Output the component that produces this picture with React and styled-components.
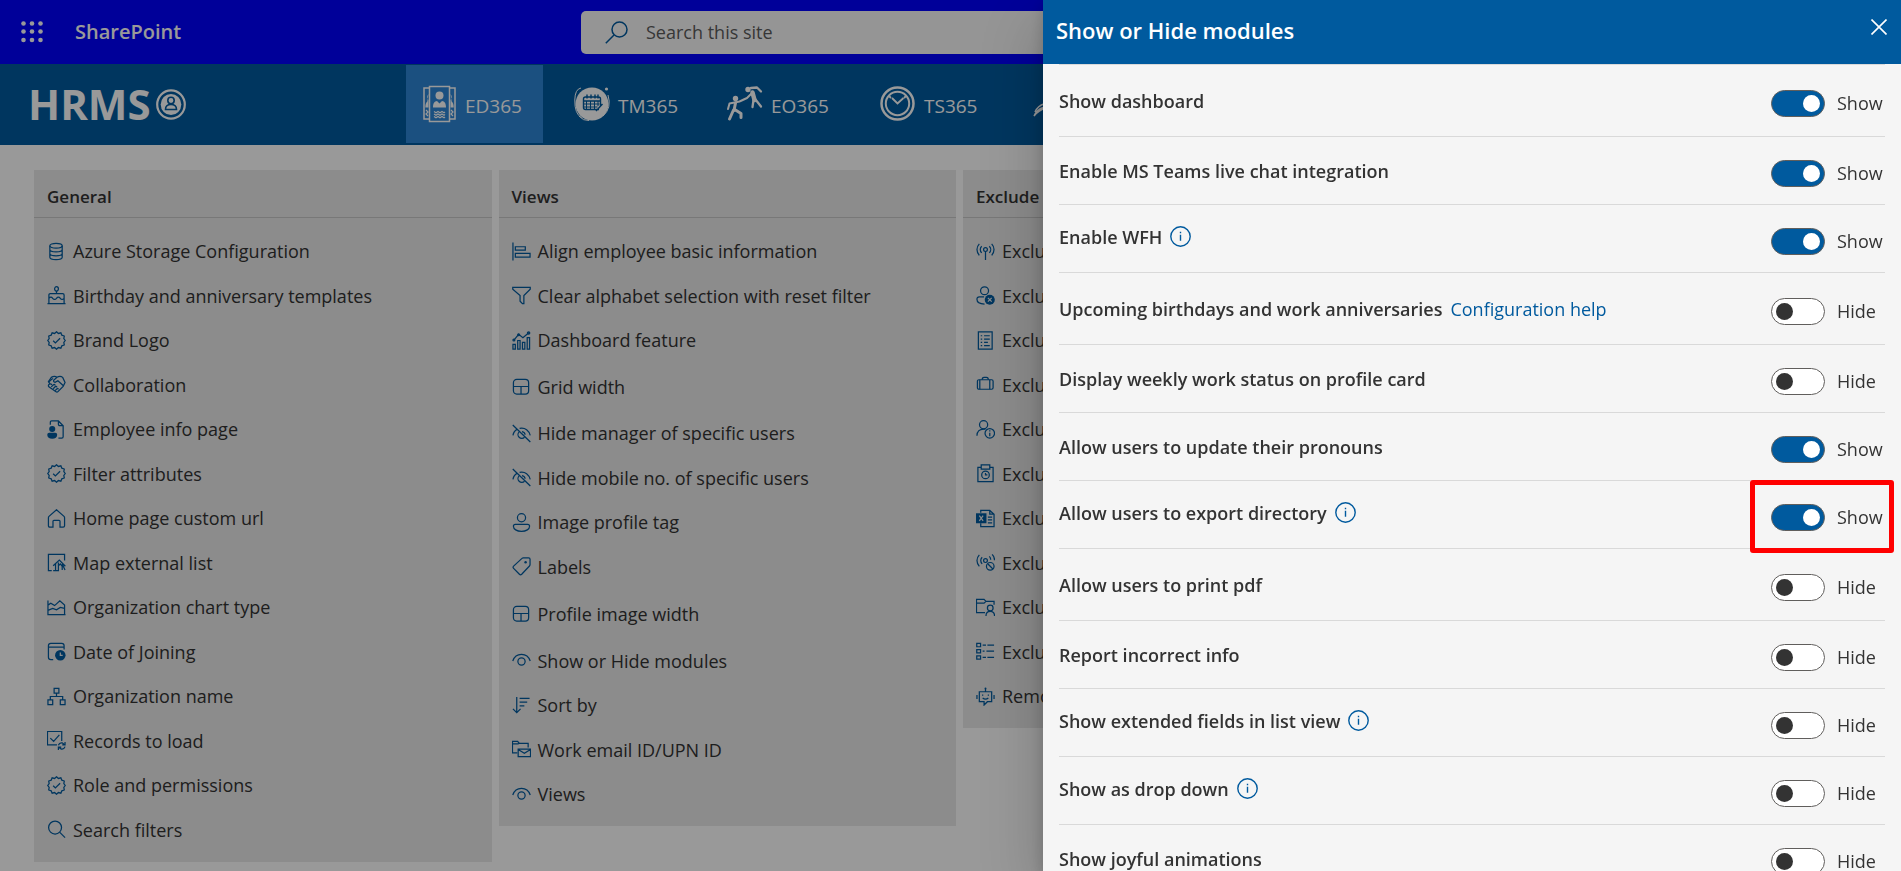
import React, { useState } from "react";
import styled, { createGlobalStyle, css } from "styled-components";

const blue = "#005a9e";
const ink = "#333333";

const GlobalStyle = createGlobalStyle`
  *, *::before, *::after { box-sizing: border-box; }
  body {
    margin: 0;
    background: #ffffff;
    color: ${ink};
    font-family: "Segoe UI", "Open Sans", "Noto Sans", sans-serif;
    font-size: 18px;
    line-height: 24px;
  }
  button, input { font: inherit; color: inherit; }
`;

/* ---------- Suite bar ---------- */

const SuiteBar = styled.header`
  display: grid;
  grid-template-columns: 1fr minmax(0, 739px) 1fr;
  align-items: center;
  height: 64px;
  background: #0000ff;
`;

const Brand = styled.div`
  display: flex;
  align-items: center;
  gap: 22px;
  padding: 0 11px;
`;

const Waffle = styled.button`
  display: flex;
  padding: 10px;
  border: 0;
  background: none;
  color: #ffffff;
`;

const BrandLink = styled.a`
  color: #ffffff;
  font-size: 20px;
  font-weight: 600;
  text-decoration: none;
`;

const SearchBox = styled.label`
  display: flex;
  align-items: center;
  gap: 18px;
  height: 43px;
  padding: 0 24px;
  border-radius: 5px;
  background: #f9f9f9;
  color: ${blue};
`;

const SearchInput = styled.input`
  flex: 1;
  min-width: 0;
  padding: 0;
  border: 0;
  outline: 0;
  background: none;
  &::placeholder { color: #5c5c5c; opacity: 1; }
`;

/* ---------- Product navigation ---------- */

const NavBar = styled.div`
  display: flex;
  align-items: flex-start;
  height: 81px;
  padding: 1px 0 0 28px;
  background: ${blue};
  color: #ffffff;
  overflow: hidden;
`;

const Logo = styled.a`
  display: flex;
  align-items: center;
  gap: 5px;
  flex: 0 0 378px;
  height: 78px;
  color: inherit;
  font-family: "Open Sans", "Noto Sans", sans-serif;
  font-size: 42px;
  font-weight: 700;
  line-height: 48px;
  text-decoration: none;
`;

const Tabs = styled.nav`
  display: flex;
  gap: 16px;
`;

const Tab = styled.a`
  display: flex;
  flex: none;
  align-items: center;
  gap: 8px;
  width: 137px;
  height: 78px;
  padding-left: 15px;
  color: inherit;
  font-size: 19px;
  text-decoration: none;
  ${(p) =>
    p.$active &&
    css`
      background: #2d86d6;
    `}
`;

const TabText = styled.span`
  padding-top: 4px;
`;

/* ---------- Settings cards ---------- */

const Cards = styled.main`
  display: grid;
  grid-template-columns: repeat(4, minmax(0, 1fr));
  align-items: start;
  gap: 7px;
  padding: 25px 16px 10px 34px;
`;

const Card = styled.section`
  background: #e9e9e9;
`;

const CardTitle = styled.h2`
  height: 48px;
  margin: 0;
  padding: 15px 13px 0;
  border-bottom: 1px solid #c8c8c8;
  font-size: 17px;
  font-weight: 600;
`;

const CardList = styled.ul`
  margin: 0;
  padding: 11px 13px 10px;
  list-style: none;
`;

const CardItem = styled.li`
  height: 44px;
  &:nth-child(even) { height: 45px; }
  ${(p) =>
    p.$tall &&
    css`
      &&& { height: 49px; }
    `}
`;

const CardLink = styled.a`
  display: flex;
  align-items: center;
  gap: 7px;
  height: 100%;
  color: inherit;
  text-decoration: none;
  white-space: nowrap;
  svg { color: ${blue}; }
`;

/* ---------- Overlay and side panel ---------- */

const Overlay = styled.div`
  position: fixed;
  inset: 0;
  background: rgba(0, 0, 0, 0.4);
`;

const Panel = styled.aside`
  position: fixed;
  top: 0;
  right: 0;
  bottom: 0;
  display: flex;
  flex-direction: column;
  width: 858px;
  max-width: 100%;
  background: #f5f5f5;
  box-shadow: 0 26px 58px rgba(0, 0, 0, 0.22), 0 5px 14px rgba(0, 0, 0, 0.18);
`;

const PanelHeader = styled.header`
  display: flex;
  flex: none;
  align-items: flex-start;
  justify-content: space-between;
  height: 64px;
  padding: 14px 9px 0 13px;
  background: ${blue};
  color: #ffffff;
`;

const PanelTitle = styled.h1`
  margin: 0;
  font-size: 22px;
  font-weight: 600;
  line-height: 32px;
`;

const CloseButton = styled.button`
  display: flex;
  padding: 5px;
  border: 0;
  background: none;
`;

const PanelBody = styled.div`
  flex: 1;
  min-height: 0;
  padding: 0 16px;
  overflow: auto;
  scrollbar-width: none;
`;

const Settings = styled.ul`
  margin: 0;
  padding: 0;
  border-top: 1px solid #d9d9d9;
  list-style: none;
`;

const Setting = styled.li`
  position: relative;
  display: flex;
  align-items: center;
  justify-content: space-between;
  height: ${(p) => (p.$tall ? "72px" : "68px")};
  border-bottom: 1px solid #d9d9d9;
`;

const SettingName = styled.div`
  display: flex;
  align-items: center;
  gap: 8px;
  padding-bottom: ${(p) => (p.$info ? "4px" : "0")};
  font-weight: 600;
`;

const HelpLink = styled.a`
  color: ${blue};
  font-weight: 400;
  text-decoration: none;
`;

const InfoButton = styled.button`
  display: flex;
  padding: 0;
  border: 0;
  background: none;
  color: ${blue};
`;

const ToggleGroup = styled.label`
  display: flex;
  align-items: center;
  gap: 12px;
  width: 114px;
  padding-top: 6px;
`;

const ToggleText = styled.span`
  padding-bottom: 2px;
`;

const Toggle = styled.input`
  display: flex;
  flex: none;
  align-items: center;
  width: 54px;
  height: 27px;
  margin: 0;
  padding: 0 4px;
  appearance: none;
  border: 1px solid #605e5c;
  border-radius: 14px;
  background: #ffffff;
  &::before {
    content: "";
    width: 17px;
    height: 17px;
    border-radius: 50%;
    background: ${ink};
  }
  &:checked {
    justify-content: flex-end;
    background: ${blue};
  }
  &:checked::before { background: #ffffff; }
`;

const Highlight = styled.span`
  position: absolute;
  top: -1px;
  right: -9px;
  width: 144px;
  height: 73px;
  border: 5px solid #ff0000;
  border-radius: 3px;
  pointer-events: none;
`;

/* ---------- Icons ---------- */

const IconSvg = styled.svg`
  flex: none;
  fill: none;
  stroke: currentColor;
`;

const solid = { fill: "currentColor", stroke: "none" };

const shapes = {
  database: (
    <>
      <ellipse cx="9.5" cy="4" rx="6.5" ry="2.5" />
      <path d="M3 4v12c0 1.400 2.900 2.500 6.500 2.500s6.500-1.100 6.500-2.500V4M3 8c0 1.400 2.900 2.500 6.500 2.500S16 9.400 16 8M3 12c0 1.400 2.900 2.500 6.500 2.500s6.500-1.100 6.500-2.500" />
    </>
  ),
  cake: (
    <>
      <ellipse cx="10" cy="3" rx="2" ry="2.300" />
      <path d="M10 5.300v2.700M.5 18.500h19M2 18.500V9.500Q2 8 3.500 8h13Q18 8 18 9.500v9M2 13c1.500-1.600 2.800-1.600 4 0s2.800 1.600 4 0 2.800-1.600 4 0 2.500 1.600 4 0" />
    </>
  ),
  badge: (
    <>
      <path d="M10 .8l2 1.800 2.600-.7 1 2.500 2.600.9-.5 2.700L19.200 10l-1.500 2 .5 2.700-2.600.9-1 2.500-2.600-.7-2 1.800-2-1.800-2.600.7-1-2.500-2.600-.9.5-2.700L.8 10l1.500-2-.5-2.700 2.600-.9 1-2.500 2.600.7z" />
      <path d="M6.500 10.300l2.300 2.300 5-5" />
    </>
  ),
  handshake: (
    <>
      <path d="M3.500 9.500L1.500 7l3-4.500C7 1 8.500 1 10.500 2.300 13 1 15 1.200 16.500 2.500L19 8l-2 4-5.500 5.500q-1 1-2 0L2 12.500q-1.200-1.500.3-2.700t3 .5" />
      <path d="M4.500 12.500l2.300-2.300q1.500-.8 1.800 1M6.500 14.500l2.300-2.300q1.500-.8 1.600 1M8.500 16.500l2-2q1.200-.6 1.500.7M10.500 2.300L7 5.500q-.5 2 1.500 2.200L11.500 6l5.500 5M1.500 7C4 6 4.500 4 6.500 3.800" />
    </>
  ),
  personFile: (
    <>
      <path d="M3.500 5V2.500q0-1.500 1.500-1.500h7l5 5v11.500q0 1.500-1.500 1.500H12M12 1v3.500Q12 6 13.500 6H17" />
      <circle cx="5.500" cy="9.500" r="3.200" {...solid} />
      <path d="M.3 15.500q0-2 2-2h6.400q2 0 2 2c0 2.500-2 4.300-5.200 4.300S.3 18 .3 15.500z" {...solid} />
    </>
  ),
  home: <path d="M1.500 9.300q0-.9.600-1.500L10 .8l7.900 7q.6.600.6 1.500v8.200q0 1.500-1.500 1.500h-3.300v-6q0-1-1-1H7.300q-1 0-1 1v6H3q-1.500 0-1.500-1.500z" />,
  mapHome: (
    <path d="M5 18.500H1.500v-17h17V8M6.500 13.500L13 7.500l6.300 6.500M9 18.500V11M6.500 18.500h5.500v-5l2-2 2 2.500v4M12 10v8.500M16 11.500l3 6.500" />
  ),
  areaChart: (
    <path d="M1 2.500v15h18.500M1 7.500l3-2 4 2.500L13.500 3l5 4.500v10M1 13l5-2 4 1.500 4-2.500 4.500 1" />
  ),
  dateClock: (
    <>
      <path d="M6.500 18.500H4q-2.500 0-2.500-2.500V4q0-2.500 2.500-2.500h11.500Q18 1.500 18 4v4M1.500 5.500H18" />
      <circle cx="14" cy="14" r="5.500" {...solid} />
      <path d="M14 11v3h2.500" stroke="#e9e9e9" />
    </>
  ),
  orgChart: (
    <path d="M7.500 1.500h5v5h-5zM1 13.500h5v5H1zM14 13.500h5v5h-5zM10 6.500V10M3.500 13.500V10h13v3.500" />
  ),
  records: (
    <path d="M10.500 14.500h-10v-14h15v10M3.500 7.500l3.500 3.500 6-7M12 15q1-3 4-2.500l2.500 2M19 11.500v3h-3M19 16.500q-1 3-4 2.500l-2.500-2M12 20v-3h3" />
  ),
  search: (
    <>
      <circle cx="8.500" cy="8" r="6.800" />
      <path d="M13.500 13l5.500 5.500" />
    </>
  ),
  align: <path d="M1 .5v19M3.500 5h10.500v3.500H3.500zM3.500 12H19v4H3.500z" />,
  funnel: <path d="M.8 1.500h18.400v1.800L12.500 10v8.500H11L8.500 16v-6L.8 3.300z" />,
  barTrend: (
    <>
      <path d="M1 14h2.500v5H1zM6 10h2.500v9H6zM11 12h2.500v7H11zM16 7h2.500v12H16zM2 9.500l5-6 4.500 3.500L18 1.500" />
      <circle cx="2" cy="9.500" r="1" />
      <circle cx="7" cy="4" r="1" />
      <circle cx="17.500" cy="2" r="1.200" />
    </>
  ),
  layout: (
    <>
      <rect x="1.500" y="2.500" width="16" height="15.500" rx="3.500" />
      <path d="M1.500 10h16M9.500 10v8" />
    </>
  ),
  eyeOff: (
    <>
      <path d="M.8 1l18.500 18M1 12c.5-3 2.200-5.300 4.700-6.600M8 4.500c6-1.200 10 2.500 11.200 7.500" />
      <path d="M7.500 8.300a4 4 0 1 0 5.700 5.700M10.500 8q3 .5 3.300 3.300" />
    </>
  ),
  contact: (
    <>
      <circle cx="10" cy="5" r="4.300" />
      <path d="M1.500 14q0-2 2-2h13q2 0 2 2c0 3-3.500 5.300-8.500 5.300S1.500 17 1.500 14z" />
    </>
  ),
  tag: (
    <>
      <path d="M10.500 1.500q.6-.6 1.500-.6h5.500q1.500 0 1.500 1.500V8q0 .9-.6 1.500l-8.200 8.700q-1.200 1.200-2.400 0L1.700 12q-1.200-1.200 0-2.400z" />
      <circle cx="14.300" cy="5.500" r="1.300" {...solid} />
    </>
  ),
  eye: (
    <>
      <path d="M.8 10.500C2.300 6 5.500 3.500 10 3.500s7.700 2.500 9.200 7" />
      <circle cx="10" cy="11" r="3.800" />
    </>
  ),
  sort: <path d="M5 1v16.500M1 13.500l4 4 4-4M8 2.500h10.500M8 6.500h8M8 10.500h5" />,
  folderMail: (
    <path d="M5.500 13.500h-5v-12h5.500l1.500 2h9.500V8M.5 4h6l1.500-1M6.500 9.500h13v8h-13zM6.500 10l6.500 4 6.500-4" />
  ),
  antenna: (
    <>
      <circle cx="10" cy="8" r="2" />
      <path d="M10 10v9M3.500 2C.2 5.500.2 10.500 3.500 14M6 4.500c-2 2-2 5 0 7M16.500 2c3.300 3.500 3.300 8.500 0 12M14 4.500c2 2 2 5 0 7" />
    </>
  ),
  personRemove: (
    <>
      <circle cx="9" cy="5" r="4.200" />
      <path d="M8.500 11.500h-5Q1 11.500 1 14c0 3 3 5 8 5" />
      <circle cx="14.500" cy="14.500" r="5.300" {...solid} />
      <path d="M12.500 12.500l4 4M16.500 12.500l-4 4" stroke="#e9e9e9" />
    </>
  ),
  report: (
    <path d="M2.500 1h14.500v18H2.500zM5 5h1.500M8.500 5h6M5 8.500h1.500M8.500 8.500h6M5 12h1.500M8.500 12h4M5 15.500h1.500M8.500 15.500h6" />
  ),
  bag: (
    <>
      <rect x="1.500" y="5" width="16.500" height="10" rx="1.500" />
      <path d="M6.500 5q0-2.500 2-2.500h2.500q2 0 2 2.500M4 5v10M14.500 5v10" />
    </>
  ),
  personInfo: (
    <>
      <circle cx="8" cy="5" r="4.300" />
      <path d="M1 16.500c0-4.500 3-7 7-7h2" />
      <circle cx="14.500" cy="14" r="5" />
      <path d="M14.500 13.500v3.500M14.500 10.800v1.300" />
    </>
  ),
  clockBadge: (
    <>
      <path d="M5.500 3.500H2v15h16v-15h-3.500M5.500 1h9v4.500h-9z" />
      <circle cx="10" cy="11.500" r="4" />
      <path d="M10 9.500v2h2" />
    </>
  ),
  excel: (
    <>
      <path d="M5 4V1.500h9.500l4.500 4V18.500H5V15M14.500 1.500v4H19M12.500 8.500H17M12.500 11.500H17M12.500 14.500H17" />
      <path d="M0 4.500h11v10.500H0z" {...solid} />
      <path d="M3.500 7l4 5.500M7.500 7l-4 5.500" stroke="#e9e9e9" />
    </>
  ),
  signalOff: (
    <>
      <circle cx="10" cy="8" r="2" />
      <path d="M3.500 2C.2 5.500.2 10.500 3.500 14M6.500 4.500c-2 2-2 5 0 7M14 3.500c1 1 1.500 2 1.500 3.500M17 1.500c1.500 1.500 2.500 4 2.500 6" />
      <circle cx="15" cy="14" r="4" />
      <path d="M12.300 11.300l5.500 5.500" />
    </>
  ),
  folderPerson: (
    <>
      <path d="M9.500 15.500h-9v-14h8l2 2h8.500V7M.5 5.500h8l2-2" />
      <circle cx="15" cy="10.500" r="3" />
      <path d="M10.500 19c0-3.500 2-5 4.500-5s4.500 1.500 4.500 5" />
    </>
  ),
  list: (
    <path d="M.8 1.500h4v3.500h-4zM.8 8h4v3.500h-4zM.8 14.500h4V18h-4zM7 3.300h3.500M12 3.300h7M7 9.700h2M11 9.700h8M7 16.200h3.500M12 16.200h7" />
  ),
  bot: (
    <>
      <path d="M3.500 5h13v10.500H12L8.500 19v-3.500h-5zM10 5V1.500M1 8.500v4M19 8.500v4M7 11.500q3 2.500 6 0M7 8v1.200M13 8v1.200" />
      <circle cx="10" cy="1.500" r="1" {...solid} />
    </>
  ),
};

function Icon({ name, size = 19 }) {
  return (
    <IconSvg width={size} height={size} viewBox="0 0 20 20" strokeWidth="1.300" aria-hidden="true">
      {shapes[name]}
    </IconSvg>
  );
}

const WaffleIcon = () => (
  <IconSvg width="22" height="22" viewBox="0 0 22 22" aria-hidden="true">
    {[2.500, 10.500, 19].map((y) =>
      [2.500, 11, 19.500].map((x) => <circle key={`${x}-${y}`} cx={x} cy={y} r="2.300" {...solid} />)
    )}
  </IconSvg>
);

const SiteSearchIcon = () => (
  <IconSvg width="23" height="23" viewBox="0 0 23 23" strokeWidth="1.500" aria-hidden="true">
    <circle cx="14.500" cy="8.500" r="7.500" />
    <path d="M9 14L.8 22.200" />
  </IconSvg>
);

const LogoMark = () => (
  <IconSvg width="30" height="31" viewBox="0 0 30 31" aria-hidden="true">
    <ellipse cx="15" cy="15.500" rx="13.800" ry="14.200" strokeWidth="2.200" />
    <ellipse cx="15" cy="15.500" rx="10.300" ry="10.600" {...solid} />
    <circle cx="15" cy="11.500" r="3.200" stroke={blue} strokeWidth="1.600" />
    <path d="M9.500 20.500c0-4 2.500-5 5.500-5s5.500 1 5.500 5z" stroke={blue} strokeWidth="1.600" />
  </IconSvg>
);

const CloseIcon = () => (
  <IconSvg width="16" height="16" viewBox="0 0 16 16" strokeWidth="1.600" aria-hidden="true">
    <path d="M.5.5l15 15M15.500.5l-15 15" />
  </IconSvg>
);

const InfoIcon = () => (
  <IconSvg width="21" height="21" viewBox="0 0 21 21" strokeWidth="1.400" aria-hidden="true">
    <circle cx="10.500" cy="10.500" r="9.700" />
    <path d="M10.500 8.800v6M10.500 5.700v1.500" />
  </IconSvg>
);

const TabSvg = ({ children }) => (
  <IconSvg width="36" height="38" viewBox="0 0 36 38" strokeWidth="1.500" aria-hidden="true">
    {children}
  </IconSvg>
);

const DirectoryIcon = () => (
  <TabSvg>
    <g transform="translate(2 0)">
      <path d="M6 3H1v31h5M27 3h5v31h-5M6.500 1.500h20v35h-20z" />
      <circle cx="16.500" cy="10.500" r="4" {...solid} />
      <path d="M10 22.500c0-4.500 1.500-6 4-6.500l2.500 2.500L19 16c2.500.5 4 2 4 6.500z" {...solid} />
      <path d="M5.500 9q-2.500 3 0 6v7.500H2.300q0-4.500 2-6zM27.500 9q2.500 3 0 6v7.500h3.200q0-4.500-2-6z" {...solid} />
      <path
        d="M11 26.500l2 1.300 2-1.300 2 1.300 2-1.300 2 1.300 1-1M11 29l2 1.300 2-1.300 2 1.300 2-1.300 2 1.300 1-1M11 31.500l2 1.300 2-1.300 2 1.300 2-1.300 2 1.300 1-1M3 25l2 2-2 2 2 2M28 25l2 2-2 2 2 2"
        strokeWidth="1.200"
      />
    </g>
  </TabSvg>
);

const CalendarBlobIcon = () => (
  <TabSvg>
    <circle cx="18" cy="19" r="16.500" {...solid} />
    <path d="M7 3Q1 4 .8 15q-.3 14 7 18M34 10q4 13-5 21M5 31q4 5 10 4.500" strokeWidth="1" />
    <circle cx="32.500" cy="4" r="1.600" {...solid} />
    <g stroke={blue} strokeWidth="1.400">
      <path d="M25 24.500H11.500q-2 0-2-2V14q0-2 2-2h13q2 0 2 2v8M9.500 16h17M13 9.500v4M17 9.500v4M21 9.500v4M24 9.500v4M22 26l6.500-7" />
      <path d="M12.500 16v8.500M16.500 16v8.500M20.500 16v8.500M24 16v5M9.500 19h16M9.500 22h14" strokeWidth="1" />
    </g>
  </TabSvg>
);

const RunnersIcon = () => (
  <TabSvg>
    <circle cx="8.500" cy="13.500" r="2.700" {...solid} />
    <circle cx="21" cy="4.500" r="2.700" {...solid} />
    <g strokeLinecap="round" strokeLinejoin="round">
      <path d="M8.500 18L7 25.500M6.500 25l-4 9M8.500 25l5.500 3.500v4" strokeWidth="3" />
      <path d="M1 24l1.500-5.500 5-1 5-1L20 13l6-6" strokeWidth="2" />
      <path d="M25.500 7.500l2 7.500" strokeWidth="4.500" />
      <path d="M26.500 15l-1 7M28.500 14.500l5.500 7M24 3l6-.5 4 4" strokeWidth="2.300" />
    </g>
  </TabSvg>
);

const ClockIcon = () => (
  <TabSvg>
    <circle cx="17.500" cy="18.500" r="16" strokeWidth="2.500" />
    <circle cx="17.500" cy="18.500" r="11.700" strokeWidth="2" />
    <path d="M12 13l5.500 5.500 6-5.500M9 11l2 2M26 11l-2 2" strokeWidth="1.800" />
  </TabSvg>
);

const WaveIcon = () => (
  <TabSvg>
    <path d="M1 31c4-9 12-11 26-9-10-.5-19 0-26 9zM2 27c4-9 12-10 27-9" />
  </TabSvg>
);

/* ---------- Data ---------- */

const tabs = [
  { name: "ED365", icon: DirectoryIcon, active: true },
  { name: "TM365", icon: CalendarBlobIcon },
  { name: "EO365", icon: RunnersIcon },
  { name: "TS365", icon: ClockIcon },
  { name: "", icon: WaveIcon },
];

const cards = [
  {
    title: "General",
    items: [
      ["database", "Azure Storage Configuration"],
      ["cake", "Birthday and anniversary templates"],
      ["badge", "Brand Logo"],
      ["handshake", "Collaboration"],
      ["personFile", "Employee info page"],
      ["badge", "Filter attributes"],
      ["home", "Home page custom url"],
      ["mapHome", "Map external list"],
      ["areaChart", "Organization chart type"],
      ["dateClock", "Date of Joining"],
      ["orgChart", "Organization name"],
      ["records", "Records to load"],
      ["badge", "Role and permissions"],
      ["search", "Search filters"],
    ],
  },
  {
    title: "Views",
    items: [
      ["align", "Align employee basic information"],
      ["funnel", "Clear alphabet selection with reset filter"],
      ["barTrend", "Dashboard feature"],
      ["layout", "Grid width"],
      ["eyeOff", "Hide manager of specific users"],
      ["eyeOff", "Hide mobile no. of specific users"],
      ["contact", "Image profile tag"],
      ["tag", "Labels"],
      ["layout", "Profile image width"],
      ["eye", "Show or Hide modules"],
      ["sort", "Sort by"],
      ["folderMail", "Work email ID/UPN ID"],
      ["eye", "Views"],
    ],
  },
  {
    title: "Exclude",
    items: [
      ["antenna", "Exclu"],
      ["personRemove", "Exclu"],
      ["report", "Exclu"],
      ["bag", "Exclu"],
      ["personInfo", "Exclu"],
      ["clockBadge", "Exclu"],
      ["excel", "Exclu"],
      ["signalOff", "Exclu"],
      ["folderPerson", "Exclu"],
      ["list", "Exclu"],
      ["bot", "Remo"],
    ],
  },
];

const initialSettings = [
  { name: "Show dashboard", on: true, tall: true },
  { name: "Enable MS Teams live chat integration", on: true },
  { name: "Enable WFH", on: true, info: true },
  { name: "Upcoming birthdays and work anniversaries", on: false, tall: true, help: "Configuration help" },
  { name: "Display weekly work status on profile card", on: false },
  { name: "Allow users to update their pronouns", on: true },
  { name: "Allow users to export directory", on: true, info: true, highlight: true },
  { name: "Allow users to print pdf", on: false, tall: true },
  { name: "Report incorrect info", on: false },
  { name: "Show extended fields in list view", on: false, info: true },
  { name: "Show as drop down", on: false, info: true },
  { name: "Show joyful animations", on: false },
];

/* ---------- Page ---------- */

function SettingRow({ setting, id, onToggle }) {
  return (
    <Setting $tall={setting.tall}>
      <SettingName $info={setting.info}>
        <span id={id}>{setting.name}</span>
        {setting.info && (
          <InfoButton type="button" aria-label={`About ${setting.name}`}>
            <InfoIcon />
          </InfoButton>
        )}
        {setting.help && <HelpLink href="#help">{setting.help}</HelpLink>}
      </SettingName>
      <ToggleGroup>
        <Toggle
          type="checkbox"
          role="switch"
          aria-labelledby={id}
          checked={setting.on}
          onChange={onToggle}
        />
        <ToggleText>{setting.on ? "Show" : "Hide"}</ToggleText>
      </ToggleGroup>
      {setting.highlight && <Highlight />}
    </Setting>
  );
}

export default function App() {
  const [settings, setSettings] = useState(initialSettings);
  const toggle = (index) =>
    setSettings((all) => all.map((s, i) => (i === index ? { ...s, on: !s.on } : s)));

  return (
    <>
      <GlobalStyle />
      <SuiteBar>
        <Brand>
          <Waffle type="button" aria-label="App launcher">
            <WaffleIcon />
          </Waffle>
          <BrandLink href="#sharepoint">SharePoint</BrandLink>
        </Brand>
        <SearchBox>
          <SiteSearchIcon />
          <SearchInput type="search" placeholder="Search this site" aria-label="Search this site" />
        </SearchBox>
      </SuiteBar>

      <NavBar>
        <Logo href="#home">
          HRMS
          <LogoMark />
        </Logo>
        <Tabs>
          {tabs.map(({ name, icon: TabIcon, active }, i) => (
            <Tab key={i} href={`#app-${i}`} $active={active}>
              <TabIcon />
              <TabText>{name}</TabText>
            </Tab>
          ))}
        </Tabs>
      </NavBar>

      <Cards>
        {cards.map((card) => (
          <Card key={card.title}>
            <CardTitle>{card.title}</CardTitle>
            <CardList>
              {card.items.map(([icon, text], i) => (
                <CardItem key={i} $tall={icon === "layout"}>
                  <CardLink href={`#${icon}-${i}`}>
                    <Icon name={icon} />
                    {text}
                  </CardLink>
                </CardItem>
              ))}
            </CardList>
          </Card>
        ))}
      </Cards>

      <Overlay />
      <Panel role="dialog" aria-labelledby="panel-title">
        <PanelHeader>
          <PanelTitle id="panel-title">Show or Hide modules</PanelTitle>
          <CloseButton type="button" aria-label="Close">
            <CloseIcon />
          </CloseButton>
        </PanelHeader>
        <PanelBody>
          <Settings>
            {settings.map((s, i) => (
              <SettingRow key={s.name} id={`setting-${i}`} setting={s} onToggle={() => toggle(i)} />
            ))}
          </Settings>
        </PanelBody>
      </Panel>
    </>
  );
}
